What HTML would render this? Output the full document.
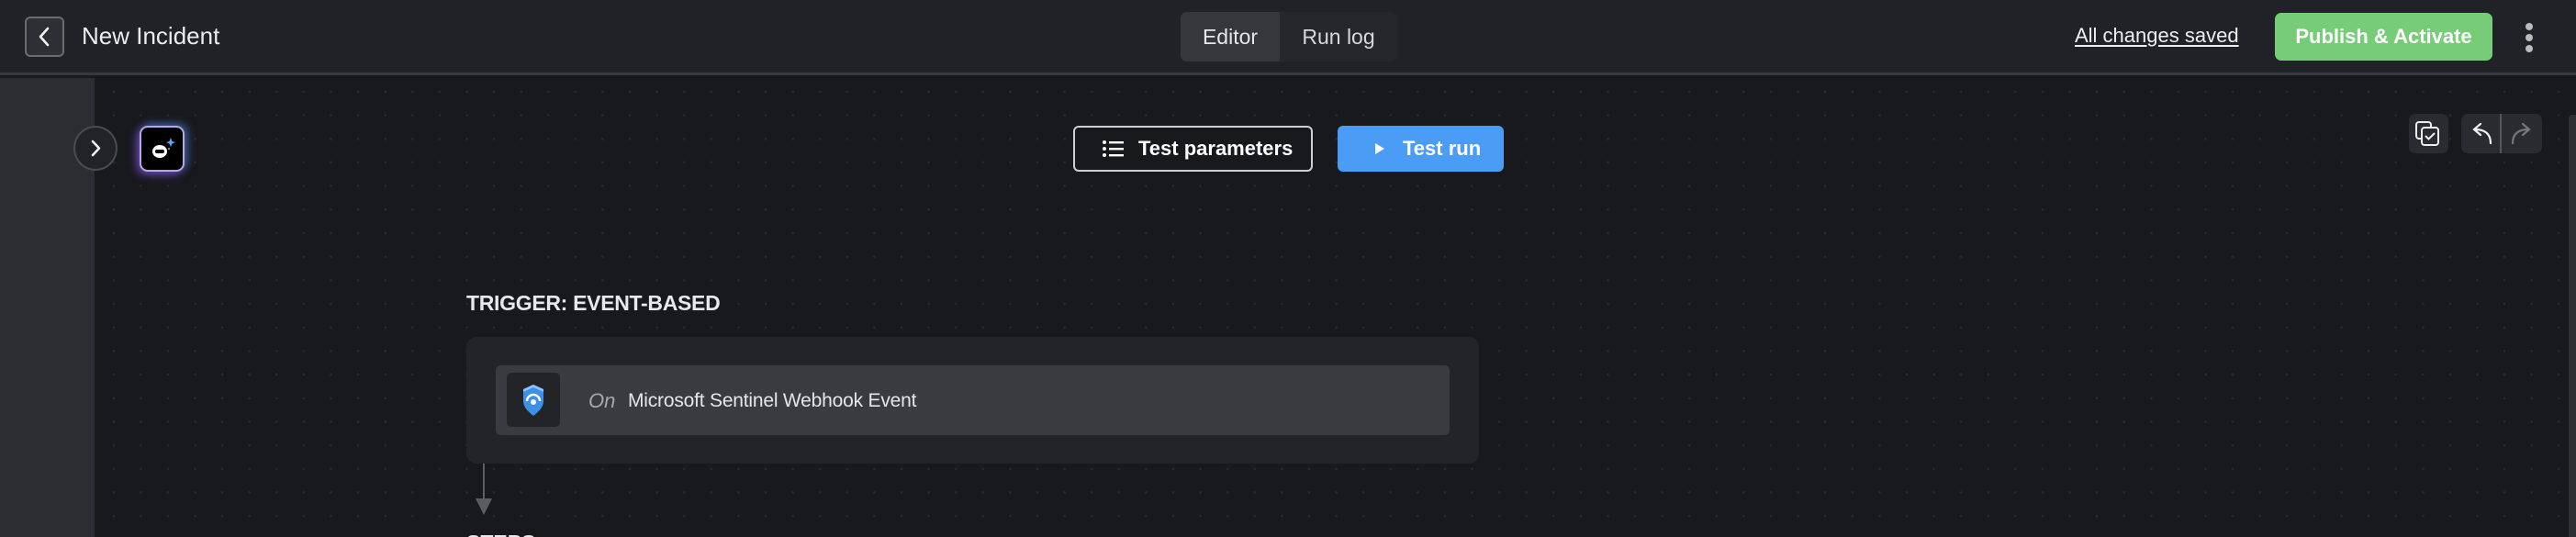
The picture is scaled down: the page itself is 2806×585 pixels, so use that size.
<!DOCTYPE html>
<html><head><meta charset="utf-8"><style>
*{margin:0;padding:0;box-sizing:border-box}
html{width:2806px;height:585px;overflow:hidden}
body{width:2806px;height:585px;overflow:hidden;background:#18191d;font-family:"Liberation Sans",sans-serif;color:#e8e8ea;position:relative}
.hdr{position:absolute;left:0;top:0;width:2806px;height:82px;background:#212227;border-bottom:3px solid #38393e}
.side{position:absolute;left:0;top:85px;width:103px;height:500px;background:#2c2d32}
.canvas{position:absolute;left:103px;top:85px;right:0;bottom:0;background-color:#18191d;background-image:radial-gradient(circle,#2a2b30 1.1px,transparent 1.5px);background-size:29.6px 25.7px;background-position:6px 2px}
.abs{position:absolute}
</style></head><body>
<div class="hdr"></div>
<div class="side"></div>
<div class="canvas"></div>

<div class="abs" style="left:27px;top:18px;width:43px;height:44px;border:2px solid #6a6b70;border-radius:6px;background:#2e2f34"></div>
<svg class="abs" style="left:27px;top:18px" width="43" height="44"><path d="M25 13 L17 22 L25 31" stroke="#f0f0f0" stroke-width="2.6" fill="none" stroke-linecap="round" stroke-linejoin="round"/></svg>
<div class="abs" style="left:89px;top:22px;font-size:26px;line-height:34px;color:#ececee">New Incident</div>

<div class="abs" style="left:1286px;top:13px;width:236px;height:54px;background:#26272c;border-radius:7px"></div>
<div class="abs" style="left:1286px;top:13px;width:108px;height:54px;background:#36373c;border-radius:7px 0 0 7px;font-size:23px;line-height:54px;text-align:center;color:#e6e6e8">Editor</div>
<div class="abs" style="left:1394px;top:13px;width:128px;height:54px;font-size:23px;line-height:54px;text-align:center;color:#d8d8da">Run log</div>

<div class="abs" style="left:2260px;top:24px;font-size:22px;line-height:30px;color:#eee;text-decoration:underline;text-underline-offset:3px">All changes saved</div>
<div class="abs" style="left:2478px;top:14px;width:237px;height:52px;background:#77cd77;border-radius:7px;font-size:22px;font-weight:bold;line-height:52px;text-align:center;color:#fff">Publish &amp; Activate</div>
<div class="abs" style="left:2751px;top:25px;width:8px;height:8px;border-radius:50%;background:#bbb"></div>
<div class="abs" style="left:2751px;top:37px;width:8px;height:8px;border-radius:50%;background:#bbb"></div>
<div class="abs" style="left:2751px;top:49px;width:8px;height:8px;border-radius:50%;background:#bbb"></div>

<div class="abs" style="left:80px;top:137px;width:48px;height:49px;border-radius:50%;background:#222328;border:2px solid #4a4b50"></div>
<svg class="abs" style="left:80px;top:137px" width="48" height="49"><path d="M21 17 L28 24.5 L21 32" stroke="#eee" stroke-width="2.6" fill="none" stroke-linecap="round" stroke-linejoin="round"/></svg>
<div class="abs" style="left:152px;top:137px;width:49px;height:50px;border-radius:9px;background:#000;border:2px solid #b9a6e6;box-shadow:-3px 3px 10px rgba(150,90,255,.6),3px -2px 10px rgba(80,170,255,.5)"></div>
<svg class="abs" style="left:152px;top:137px" width="49" height="50"><ellipse cx="22" cy="28" rx="8" ry="7" fill="#fff"/><rect x="17" y="26" width="10" height="4" rx="2" fill="#000"/><path d="M34 13 L35.5 17 L39 18 L35.5 19.5 L34 23 L32.5 19.5 L29 18 L32.5 17Z" fill="#5aa8ff"/><circle cx="32" cy="25" r="1" fill="#9c9"/></svg>

<div class="abs" style="left:1169px;top:137px;width:261px;height:50px;border:2px solid #cfcfd2;border-radius:6px;background:#18191d"></div>
<svg class="abs" style="left:1200px;top:150px" width="26" height="24"><g fill="#fff"><circle cx="3" cy="5" r="2"/><circle cx="3" cy="12" r="2"/><circle cx="3" cy="19" r="2"/><rect x="8" y="4" width="16" height="2.4"/><rect x="8" y="11" width="16" height="2.4"/><rect x="8" y="18" width="16" height="2.4"/></g></svg>
<div class="abs" style="left:1240px;top:137px;font-size:22px;font-weight:bold;line-height:50px;color:#fff">Test parameters</div>
<div class="abs" style="left:1457px;top:137px;width:181px;height:50px;background:#4a9cf5;border-radius:6px"></div>
<svg class="abs" style="left:1496px;top:154px" width="14" height="16"><path d="M2 2 L12 8 L2 14Z" fill="#fff"/></svg>
<div class="abs" style="left:1528px;top:137px;font-size:22px;font-weight:bold;line-height:50px;color:#fff">Test run</div>

<div class="abs" style="left:2624px;top:124px;width:43px;height:43px;background:#2a2b30;border-radius:7px"></div>
<svg class="abs" style="left:2624px;top:124px" width="43" height="43"><rect x="8" y="9" width="16" height="18" rx="3" fill="none" stroke="#eee" stroke-width="2"/><rect x="14" y="15" width="18" height="19" rx="3" fill="#2a2b30" stroke="#eee" stroke-width="2"/><path d="M18 24 L21.5 27.5 L28 21" stroke="#eee" stroke-width="2" fill="none"/></svg>
<div class="abs" style="left:2681px;top:124px;width:88px;height:43px;background:#2a2b30;border-radius:7px"></div>
<div class="abs" style="left:2723px;top:124px;width:2px;height:43px;background:#55565b"></div>
<svg class="abs" style="left:2681px;top:124px" width="88" height="43"><path d="M32 32 C32 22 26 17 15 17 M21 11 L14 17 L21 23" stroke="#eee" stroke-width="2.2" fill="none" stroke-linecap="round"/><path d="M56 32 C56 22 62 17 73 17 M67 11 L74 17 L67 23" stroke="#777" stroke-width="2.2" fill="none" stroke-linecap="round"/></svg>
<div class="abs" style="left:2798px;top:125px;width:8px;height:460px;background:#2e2f34;border-radius:4px 0 0 0"></div>

<div class="abs" style="left:508px;top:316px;font-size:23px;font-weight:bold;line-height:28px;color:#e8e8ea;letter-spacing:-0.3px">TRIGGER: EVENT-BASED</div>
<div class="abs" style="left:508px;top:367px;width:1103px;height:138px;background:#232428;border-radius:11px"></div>
<div class="abs" style="left:540px;top:398px;width:1039px;height:76px;background:#3a3b40;border-radius:5px"></div>
<div class="abs" style="left:552px;top:406px;width:58px;height:59px;background:#232428;border-radius:5px"></div>
<svg class="abs" style="left:552px;top:406px" width="58" height="59"><path d="M29 13 L40 18 L40 31 C40 38 34 43 29 47 C24 43 18 38 18 31 L18 18Z" fill="#3d8fe8"/><path d="M22 31 A7 7 0 0 1 36 31" stroke="#fff" stroke-width="2.5" fill="none"/><circle cx="29" cy="32" r="3" fill="#fff"/><path d="M29 13 L40 18 L40 21 L29 16 L18 21 L18 18Z" fill="#8cc2ff"/></svg>
<div class="abs" style="left:641px;top:422px;font-size:22px;line-height:30px;font-style:italic;color:#a8a8ac">On</div>
<div class="abs" style="left:684px;top:422px;font-size:21px;line-height:30px;color:#e6e6e8;letter-spacing:-0.2px">Microsoft Sentinel Webhook Event</div>

<div class="abs" style="left:526px;top:505px;width:2px;height:50px;background:#5c5d62"></div>
<svg class="abs" style="left:518px;top:543px" width="18" height="20"><path d="M0 0 L18 0 L9 18Z" fill="#5c5d62"/></svg>
<div class="abs" style="left:508px;top:577px;font-size:23px;font-weight:bold;line-height:28px;color:#e8e8ea">STEPS</div>
</body></html>
